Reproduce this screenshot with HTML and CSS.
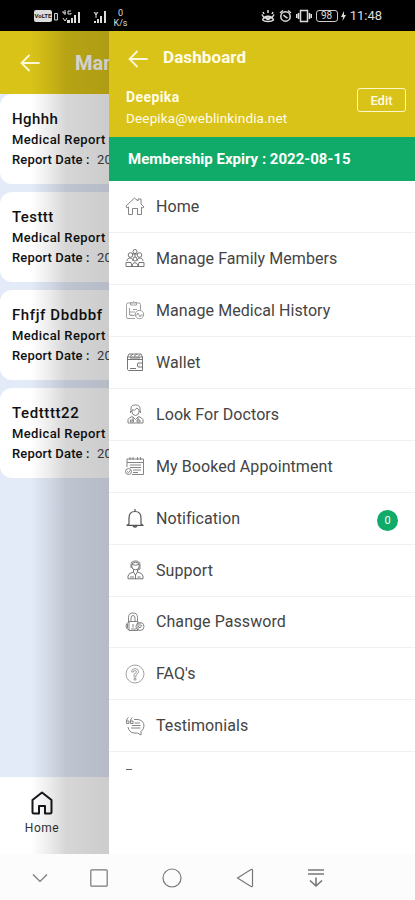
FILE: index.html
```html
<!DOCTYPE html>
<html lang="en">
<head>
  <meta charset="UTF-8">
  <meta name="viewport" content="width=device-width, initial-scale=1.0">
  <title>Dashboard</title>
  <link rel="stylesheet" href="styles.css">
</head>
<body>

<div class="status-bar">
  <div class="status-left">
    <span class="volte">VoLTE</span>
    <svg width="4" height="10" viewBox="0 0 4 10"><path d="M.6 2.5h2.8v6.5H.6z" fill="none" stroke="#ddd"/></svg>
    <svg class="signal-one" width="20" height="15" viewBox="0 0 20 15" fill="#ddd">
      <path d="M3 1v5M1 2v2h3M9 2H6v3h3V4M1 9l2 3 2-3" fill="none" stroke="#ddd"/>
      <path d="M5 11h3v3H5zM9 9h2v5H9zM12 6h2v8h-2zM16 3h2v11h-2z"/>
    </svg>
    <svg class="signal-two" width="14" height="15" viewBox="0 0 14 15" fill="#ddd">
      <path d="M1 3l2 3 2-3M3 3v6" fill="none" stroke="#ddd"/>
      <path d="M1 12h2v2H1zM4 10h2v4H4zM7 7h2v7H7zM11 2h2v12h-2z"/>
    </svg>
    <span class="speed">0<br>K/s</span>
  </div>
  <div class="status-right">
    <svg width="14" height="14" viewBox="0 0 14 14" fill="none" stroke="#ddd" stroke-width="1.5"><path d="M1 5.500c2 5 10 5 12 0M1.500 11c2-5 9-5 11 0-2 2-9 2-11 0M3 5L2 3M7 4V1M11 5l1-2"/><circle cx="7" cy="9" r="1.500"/></svg>
    <svg width="13" height="14" viewBox="0 0 13 14" fill="none" stroke="#ddd" stroke-width="1.5"><circle cx="6.5" cy="7.5" r="4.7"/><path d="M1 4l3-2.500M12 4L9 1.500M4.500 6l2 2 2 1"/></svg>
    <svg width="16" height="14" viewBox="0 0 16 14" fill="none" stroke="#ddd" stroke-width="1.5"><path d="M4.500 1.500h7v11h-7zM2.500 4v6M13.500 4v6M.7 5v4M15.300 5v4"/></svg>
    <span class="battery">98</span>
    <svg class="bolt" width="5" height="10" viewBox="0 0 5 10"><path d="M3 0L0 6h2l-.5 4L5 4H3z" fill="#ddd"/></svg>
    <span class="clock">11:48</span>
  </div>
</div>

<div class="app">
  <div class="page">
    <div class="page-header">
      <svg width="20" height="18" viewBox="0 0 20 18" class="arrow"><path d="M19 9H1.500M9 1.500L1.500 9 9 16.500"/></svg>
      <span class="page-title">Manage</span>
    </div>
    <div class="cards">
      <div class="card">
        <h3>Hghhh</h3>
        <p>Medical Report</p>
        <p class="report-date">Report Date : <span class="date">2022</span></p>
      </div>
      <div class="card">
        <h3>Testtt</h3>
        <p>Medical Report</p>
        <p class="report-date">Report Date : <span class="date">2022</span></p>
      </div>
      <div class="card">
        <h3 class="wide">Fhfjf Dbdbbf</h3>
        <p>Medical Report</p>
        <p class="report-date">Report Date : <span class="date">2022</span></p>
      </div>
      <div class="card">
        <h3 class="wide">Tedtttt22</h3>
        <p>Medical Report</p>
        <p class="report-date">Report Date : <span class="date">2022</span></p>
      </div>
    </div>
    <div class="tab-bar">
      <div class="tab">
        <svg width="22" height="24" viewBox="0 0 22 24" fill="none" stroke="#16161c" stroke-width="2" stroke-linejoin="round"><path d="M1.500 9L11 1.500 20.500 9v12q0 1.500-1.500 1.500h-5V15H8v7.500H3q-1.500 0-1.500-1.500z"/></svg>
        <span>Home</span>
      </div>
    </div>
    <div class="shade"></div>
  </div>

  <div class="drawer">
    <div class="drawer-header">
      <div class="drawer-top">
        <svg width="20" height="18" viewBox="0 0 20 18" class="arrow"><path d="M19 9H1.500M9 1.500L1.500 9 9 16.500"/></svg>
        <span class="drawer-title">Dashboard</span>
      </div>
      <div class="user">
        <div>
          <div class="user-name">Deepika</div>
          <div class="user-mail">Deepika@weblinkindia.net</div>
        </div>
        <button class="edit" type="button">Edit</button>
      </div>
    </div>
    <div class="expiry">Membership Expiry : 2022-08-15</div>
    <ul class="menu">
      <li>
        <svg class="icon" viewBox="0 0 20 20"><path d="M1 10L9.500 2 13 5V3h3v5l3 3-1.500 1-1-1v7.500h-4v-6h-5v6h-4V11L2 12z"/></svg>
        <span>Home</span>
      </li>
      <li>
        <svg class="icon dark" viewBox="0 0 20 20"><circle cx="10" cy="3.500" r="2"/><circle cx="5.500" cy="7" r="2.300"/><circle cx="14.500" cy="7" r="2.300"/><circle cx="10" cy="11" r="2"/><path d="M7 6h6M10 5.500V9M2 13c0-4 6-4 6 0M12 13c0-4 6-4 6 0M1 18.500v-4h5l1 4zM19 18.500v-4h-5l-1 4zM7 18.500c0-5 6-5 6 0z"/></svg>
        <span>Manage Family Members</span>
      </li>
      <li>
        <svg class="icon light" viewBox="0 0 20 20"><path d="M10 18.500H3q-1.500 0-1.500-1.500V4.500Q1.500 3 3 3h11q1.500 0 1.500 1.500V10M5.500 5V2.500h2.500q.7-2 1.500 0h2V5zM4.500 8v7h3M4.500 12H10M8 9.500h4"/><circle cx="14.500" cy="14.500" r="4.200"/><path d="M9 15h3l1-2 2 4 1-2h3M5 15.500h4"/></svg>
        <span>Manage Medical History</span>
      </li>
      <li>
        <svg class="icon dark" viewBox="0 0 20 20"><path d="M2.500 5h15v13.500h-14l-1-1zM2.500 5L4 2h12l1.500 3M5 4.500L8 2M9 4.500L12 2M13 4.500L15 2.500M2.500 7.500h15M5 6h10M17.500 11h-4.500q-1.500 2 0 4h4.500M14.500 13h.5M5 16.500h6"/></svg>
        <span>Wallet</span>
      </li>
      <li>
        <svg class="icon" viewBox="0 0 20 20"><path d="M6 8V4q0-3 4.500-3T15 4v4M7 6q3 1 5-2l2 2v2q0 3-3.500 3.500Q7 11 7 8zM5.500 7v2M15.500 7v2M3 19v-3.500q1-2 4.500-3l3 3 3-3q3.500 1 4.500 3V19zM8 13v4M13 13v3M5.500 18h3v-2h-3zM12 18h3v-2h-3z"/></svg>
        <span>Look For Doctors</span>
      </li>
      <li>
        <svg class="icon" viewBox="0 0 20 20"><path d="M2 11V3h16.500v15.500H7M2 6.500h16.500M5 1v3M8 1v3M12.500 1v3M15.500 1v3M5 9h11M5 11.500h11M8 14h8M8 16.500h5"/><circle cx="3.500" cy="15.500" r="3"/><path d="M2 15.500l1.500 1.200 2-2.500"/></svg>
        <span>My Booked Appointment</span>
      </li>
      <li>
        <svg class="icon bell" viewBox="0 0 20 20"><path d="M10 1v2M4 16V10q0-6.500 6-6.500T16 10v6l2 1.300H2zM8 18q2 2 4 0"/></svg>
        <span>Notification</span>
        <span class="badge">0</span>
      </li>
      <li>
        <svg class="icon dark" viewBox="0 0 20 20"><circle cx="10.500" cy="6" r="3.800"/><path d="M6 8V5q0-4 4.500-4T15 5v4l-3 1.500M7.500 4.500q3 1.500 6 0M8.500 9.500V12l2 3 2-3V9.500M8.500 12q-5 1-5.500 4v2.800h15V16q-.5-3-5.500-4M10.500 15v4M5 17h4M12.500 17h3"/></svg>
        <span>Support</span>
      </li>
      <li>
        <svg class="icon" viewBox="0 0 20 20"><path d="M3.500 10V5.500Q3.500 1 8 1t4.500 4.500V10M6 10V6q0-2.500 2-2.500T10 6v4M4 9.500h9v9H4zM4 10q-3 1-3 4t3 4M2.500 12v4M8 12v3.500M6 17h5"/><circle cx="15" cy="14.500" r="4"/><path d="M13 14l2 2 2-3M15 11v3"/></svg>
        <span>Change Password</span>
      </li>
      <li>
        <svg class="icon light" viewBox="0 0 20 20"><circle cx="10" cy="10" r="9"/><path d="M6.500 8q0-3.500 3.500-3.500T13.500 8q0 1.500-2.500 3v2H9v-3q2.500-1 2.500-2T10 6.500 8.500 8zM9 14.500h2v1.500H9z"/></svg>
        <span>FAQ's</span>
      </li>
      <li>
        <svg class="icon" viewBox="0 0 20 20"><path d="M9 3.500h4q6 1 6 6.500 0 3-3 5.500v3.500L12.500 17H9q-5-.5-6-6M1.500 5h2.500v2.500H1.500zM1.500 5q0-2.500 2-3.500M5.500 5H8v2.500H5.500zM5.500 5q0-2.500 2-3.500M9.500 7H15M7 9.500h8.500M6 12h9.500"/></svg>
        <span>Testimonials</span>
      </li>
      <li class="cut"><i></i></li>
    </ul>
  </div>
</div>

<div class="nav-bar">
  <svg width="16" height="10" viewBox="0 0 16 10"><path d="M1 1.500l7 7 7-7"/></svg>
  <svg class="recent" width="18" height="18" viewBox="0 0 18 18"><rect x=".8" y=".8" width="16.400" height="16.400" rx="1"/></svg>
  <svg width="20" height="20" viewBox="0 0 20 20"><circle cx="10" cy="10" r="9"/></svg>
  <svg width="18" height="20" viewBox="0 0 18 20"><path d="M1.500 10L15 1.500q1.500-.5 1.500 1v15q0 1.500-1.500 1z"/></svg>
  <svg width="16" height="20" viewBox="0 0 16 20"><path d="M0 2h16M0 6h16M8 9.500V18M2 12.500L8 18l6-5.500" stroke-width="1.600"/></svg>
</div>

</body>
</html>
```
FILE: styles.css
```css
* {
  box-sizing: border-box;
}

body {
  margin: 0;
  height: 900px;
  display: flex;
  flex-direction: column;
  overflow: hidden;
  font-family: Roboto, "Liberation Sans", sans-serif;
  background-color: #fff;
}

svg {
  display: block;
  flex-shrink: 0;
}

h3, p, ul {
  margin: 0;
  padding: 0;
}

/* status bar */
.status-bar {
  height: 31px;
  flex-shrink: 0;
  display: flex;
  justify-content: space-between;
  background-color: #000;
  color: #ddd;
  padding: 1px 33px 0 34px;
}

.status-left, .status-right {
  display: flex;
  align-items: center;
}

.volte {
  width: 18px;
  height: 12px;
  margin-right: 2px;
  border-radius: 2px;
  background-color: #ddd;
  color: #222;
  font-size: 6px;
  font-weight: bold;
  line-height: 12px;
  text-align: center;
}

.signal-one {
  margin-left: 4px;
}

.signal-two {
  margin-left: 11px;
}

.speed {
  margin-left: 6px;
  padding-top: 3px;
  width: 15px;
  font-size: 9px;
  line-height: 10px;
  text-align: center;
}

.status-right {
  gap: 4px;
}

.battery {
  width: 22px;
  height: 12px;
  border: 1px solid #ccc;
  border-radius: 3px;
  font-size: 10px;
  line-height: 10px;
  text-align: center;
}

.bolt {
  margin-left: -1px;
}

.clock {
  font-size: 13px;
  line-height: 16px;
}

/* page under the drawer */
.app {
  position: relative;
  height: 823px;
  flex-shrink: 0;
  display: flex;
}

.page {
  flex: 1;
  display: flex;
  flex-direction: column;
  background-color: #e3eaf8;
}

.page-header {
  height: 63px;
  display: flex;
  align-items: center;
  gap: 35px;
  padding-left: 20px;
  background-color: #dac318;
}

.arrow {
  fill: none;
  stroke: #fff9dc;
  stroke-width: 1.8;
  stroke-linecap: round;
}

.page-title {
  color: #fff;
  font-size: 20px;
  font-weight: bold;
}

.cards {
  flex: 1;
  display: flex;
  flex-direction: column;
  gap: 8px;
}

.card {
  height: 90px;
  padding: 15px 12px 0;
  border-radius: 12px;
  background-color: #fff;
  color: #111;
}

.card h3 {
  font-size: 15px;
  font-weight: 500;
  line-height: 21px;
  letter-spacing: 0.4px;
}

.card h3.wide {
  letter-spacing: 0.6px;
}

.card p {
  font-size: 13px;
  font-weight: 500;
  line-height: 20px;
  letter-spacing: 0.38px;
}

.card p.report-date {
  letter-spacing: 0.15px;
}

.date {
  margin-left: 4px;
  font-weight: 400;
  color: #444;
}

.tab-bar {
  height: 77px;
  background-color: #fff;
}

.tab {
  width: 84px;
  padding-top: 14px;
  display: flex;
  flex-direction: column;
  align-items: center;
  gap: 6px;
  color: #333;
  font-size: 12px;
  line-height: 15px;
  letter-spacing: 0.5px;
}

.shade {
  position: absolute;
  top: 0;
  left: 0;
  width: 109px;
  height: 100%;
  background: linear-gradient(to right, rgba(0, 0, 0, 0) 30px, rgba(0, 0, 0, 0.08) 50px, rgba(0, 0, 0, 0.16) 66px, rgba(0, 0, 0, 0.2) 109px);
}

/* drawer */
.drawer {
  position: absolute;
  top: 0;
  left: 109px;
  right: 0;
  height: 100%;
  background-color: #fff;
}

.drawer-header {
  height: 106px;
  background-color: #dac318;
  color: #fffce8;
}

.drawer-top {
  height: 55px;
  display: flex;
  align-items: center;
  gap: 15px;
  padding-left: 19px;
}

.drawer-title {
  font-size: 17px;
  font-weight: bold;
  line-height: 20px;
  margin-bottom: 3px;
  letter-spacing: 0.1px;
}

.user {
  display: flex;
  justify-content: space-between;
  padding: 1px 9px 0 17px;
}

.user-name {
  font-size: 14px;
  font-weight: bold;
  line-height: 21px;
  letter-spacing: 0.4px;
}

.user-mail {
  font-size: 13.5px;
  line-height: 20px;
  letter-spacing: 0.15px;
}

.edit {
  width: 49px;
  height: 24px;
  margin-top: 1px;
  padding: 0;
  border: 1.5px solid #fff8c8;
  border-radius: 3px;
  background: none;
  color: #fffce8;
  font-family: inherit;
  font-size: 13px;
  font-weight: 500;
}

.expiry {
  height: 44px;
  padding-left: 19px;
  background-color: #10ab68;
  color: #fff;
  font-size: 15px;
  font-weight: bold;
  line-height: 44px;
}

.menu {
  list-style: none;
}

.menu li {
  height: 51.95px;
  display: flex;
  align-items: center;
  padding: 0 17px 0 16px;
  border-bottom: 1px solid #f0f0f0;
  color: #444;
  font-size: 16px;
  letter-spacing: 0.07px;
}

.icon {
  width: 20px;
  height: 20px;
  margin-right: 11px;
  fill: none;
  stroke: #777;
  stroke-width: 0.9;
  stroke-linejoin: round;
}

.icon.dark {
  stroke: #666;
}

.icon.light {
  stroke: #999;
}

.icon.bell {
  stroke: #555;
  stroke-width: 1.2;
}

.badge {
  width: 21px;
  height: 21px;
  margin-left: auto;
  margin-top: 4px;
  border-radius: 50%;
  background-color: #10ab68;
  color: #fff;
  font-size: 11px;
  line-height: 21px;
  letter-spacing: 0;
  text-align: center;
}

/* next row is scrolled out, only its first stroke shows */
.menu li.cut {
  height: 20px;
  border: none;
}

.cut i {
  width: 6px;
  height: 1px;
  margin-top: 14px;
  margin-left: 1px;
  background-color: #666;
}

/* system navigation */
.nav-bar {
  flex: 1;
  display: flex;
  align-items: center;
  gap: 54px;
  padding: 1px 0 0 32px;
  background-color: #fcfcfc;
}

.nav-bar svg {
  fill: none;
  stroke: #777;
  stroke-width: 1.2;
}

.nav-bar .recent {
  margin-left: -12px;
}
```
